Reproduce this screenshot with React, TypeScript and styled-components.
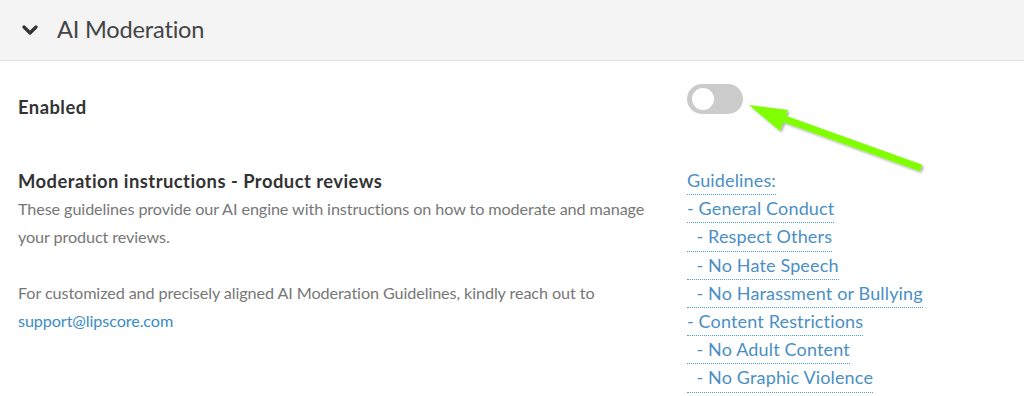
import React from "react";
import styled, { createGlobalStyle } from "styled-components";

const Global = createGlobalStyle`
  html, body { margin: 0; padding: 0; background: #fff; }
  body { font-family: Lato, "Liberation Sans", sans-serif; }
`;

const Page = styled.div`
  position: relative;
  width: 1024px;
  height: 396px;
  overflow: hidden;
  background: #fff;
`;

const Header = styled.div`
  height: 61px;
  box-sizing: border-box;
  background: #f4f4f4;
  border-bottom: 1px solid #e2e2e2;
  display: flex;
  align-items: center;
  padding-left: 22px;
  gap: 19px;
`;

const Title = styled.h2`
  margin: 0 0 2px 0;
  font-weight: 400;
  font-size: 23.6px;
  color: #444;
  letter-spacing: -0.2px;
`;

const Body = styled.div`
  display: grid;
  grid-template-columns: 669px 1fr;
  padding-left: 18px;
  padding-top: 32px;
`;

const Label = styled.div`
  font-weight: 700;
  font-size: 18.4px;
  color: #333;
  line-height: 28px;
  letter-spacing: 0.46px;
`;

const ToggleTrack = styled.div`
  width: 56px;
  height: 30px;
  border-radius: 15px;
  background: #cbcbcb;
  display: flex;
  align-items: center;
  padding-left: 5px;
  box-sizing: border-box;
  margin-top: -9px;
`;

const Knob = styled.div`
  width: 22px;
  height: 22px;
  border-radius: 50%;
  background: #fff;
`;

const Row = styled.div`
  display: contents;
`;

const Cell = styled.div<{ $pt?: number; $pr?: number }>`
  padding-top: ${(p) => p.$pt ?? 0}px;
  padding-right: ${(p) => p.$pr ?? 0}px;
`;

const Desc = styled.p`
  margin: 0 0 28px 0;
  font-size: 16.2px;
  line-height: 28px;
  color: #777;
  letter-spacing: -0.1px;
`;

const Mail = styled.a`
  color: #3b8bc4;
  text-decoration: none;
`;

const LinkList = styled.div`
  display: flex;
  flex-direction: column;
  align-items: flex-start;
`;

const GuideLink = styled.a`
  font-size: 18px;
  line-height: 27.2px;
  color: #4a8fc5;
  text-decoration: none;
  border-bottom: 1px dotted #4a9fd6;
  white-space: pre;
  letter-spacing: 0.15px;
`;

const Arrow = styled.svg`
  position: absolute;
  left: 740px;
  top: 90px;
  overflow: visible;
`;

const Chevron = () => (
  <svg width="16" height="12" viewBox="0 0 16 12">
    <path d="M2 3 L8 9 L14 3" fill="none" stroke="#333" strokeWidth="3.2" strokeLinecap="round" strokeLinejoin="round" />
  </svg>
);

const links = [
  "Guidelines:",
  "- General Conduct",
  "  - Respect Others",
  "  - No Hate Speech",
  "  - No Harassment or Bullying",
  "- Content Restrictions",
  "  - No Adult Content",
  "  - No Graphic Violence",
];

export default function App() {
  return (
    <Page>
      <Global />
      <Header>
        <Chevron />
        <Title>AI Moderation</Title>
      </Header>
      <Body>
        <Row>
          <Cell>
            <Label>Enabled</Label>
          </Cell>
          <Cell>
            <ToggleTrack>
              <Knob />
            </ToggleTrack>
          </Cell>
        </Row>
        <Row>
          <Cell $pt={46} $pr={18}>
            <Label>Moderation instructions - Product reviews</Label>
            <Desc>
              These guidelines provide our AI engine with instructions on how to moderate and manage your product reviews.
            </Desc>
            <Desc>
              For customized and precisely aligned AI Moderation Guidelines, kindly reach out to{" "}
              <Mail href="#">support@lipscore.com</Mail>
            </Desc>
          </Cell>
          <Cell $pt={46}>
            <LinkList>
              {links.map((l) => (
                <GuideLink key={l} href="#">
                  {l}
                </GuideLink>
              ))}
            </LinkList>
          </Cell>
        </Row>
      </Body>
      <Arrow width="200" height="100" viewBox="0 0 200 100">
        <defs>
          <filter id="sh" x="-20%" y="-20%" width="140%" height="140%">
            <feDropShadow dx="1.5" dy="1.5" stdDeviation="1.2" floodColor="#000" floodOpacity="0.35" />
          </filter>
        </defs>
        <g filter="url(#sh)" fill="#7fff00">
          <polygon points="9,15 48,20 40,41" />
          <line x1="42" y1="28" x2="181" y2="78" stroke="#7fff00" strokeWidth="7" />
        </g>
      </Arrow>
    </Page>
  );
}
